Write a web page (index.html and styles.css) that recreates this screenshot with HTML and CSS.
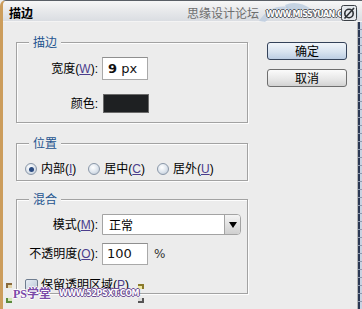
FILE: index.html
```html
<!DOCTYPE html>
<html lang="zh">
<head>
<meta charset="utf-8">
<title>描边</title>
<link rel="stylesheet" href="styles.css">
</head>
<body>
<div class="window">
  <div class="titlebar">
    <span class="title">描边</span>
    <svg class="swoosh" width="60" height="22" viewBox="0 0 60 22">
      <path d="M4 20 C12 8 22 4 34 6 C26 10 18 14 10 21 Z" fill="#b9cbe0" opacity="0.7"/>
      <path d="M30 4 C38 0 48 2 56 8 C48 7 40 8 34 12 Z" fill="#a9bfd8" opacity="0.6"/>
    </svg>
    <span class="wm-cn">思缘设计论坛</span>
    <span class="wm-url">WWW.MISSYUAN.COM</span>
    <svg class="wm-box" width="16" height="16" viewBox="0 0 16 16">
      <rect x="0.5" y="0.5" width="15" height="15" rx="2" fill="#e4e8ec" stroke="#3a3f45"/>
      <circle cx="8" cy="8.5" r="4.2" fill="none" stroke="#2c3035" stroke-width="1.6"/>
      <path d="M3.5 13.5 L13 3" stroke="#2c3035" stroke-width="1.6"/>
    </svg>
  </div>
  <div class="body">
    <div class="main">
      <div class="groups">
        <section class="group g-stroke">
          <span class="legend">描边</span>
          <div class="form">
            <label class="lbl">宽度(<u>W</u>):</label>
            <div class="field w-field"><b>9</b>&nbsp;px</div>
            <label class="lbl">颜色:</label>
            <div class="swatch"></div>
          </div>
        </section>
        <section class="group g-pos">
          <span class="legend">位置</span>
          <div class="radios">
            <span class="opt"><span class="radio on"></span>内部(<u>I</u>)</span>
            <span class="opt"><span class="radio"></span>居中(<u>C</u>)</span>
            <span class="opt"><span class="radio"></span>居外(<u>U</u>)</span>
          </div>
        </section>
        <section class="group g-blend">
          <span class="legend">混合</span>
          <div class="form blend-form">
            <label class="lbl">模式(<u>M</u>):</label>
            <div class="select"><span class="sel-text">正常</span><span class="sel-btn"><span class="tri"></span></span></div>
            <label class="lbl">不透明度(<u>O</u>):</label>
            <div class="op-row"><div class="field op-field">100</div><span class="pct">%</span></div>
          </div>
          <div class="check-row"><span class="checkbox"></span>保留透明区域(<u>P</u>)</div>
        </section>
      </div>
      <div class="buttons">
        <button class="btn default">确定</button>
        <button class="btn">取消</button>
      </div>
    </div>
    <div class="edge"></div>
  </div>
  <div class="wm-bottom">
    <span class="mk mk-tl"></span><span class="mk mk-bl"></span><span class="mk mk-tr"></span><span class="mk mk-br"></span>
    <span class="ps">PS学堂</span>
    <span class="ps-url">WWW.52PSXT.COM</span>
  </div>
</div>
</body>
</html>
```
FILE: styles.css
```css
* { box-sizing: border-box; }
html, body { margin: 0; padding: 0; }
body {
  width: 362px;
  height: 309px;
  overflow: hidden;
  font-family: "Liberation Sans", "Noto Sans CJK SC", sans-serif;
  font-size: 12px;
  color: #000;
  background: #ececec;
}
u { text-decoration: underline; color: #4b3d8c; text-underline-offset: 1px; }

.window {
  position: relative;
  width: 362px;
  height: 309px;
  overflow: hidden;
  display: flex;
  flex-direction: column;
  border-left: 3px solid #cc9d5c;
  border-top: 1px solid #5a5f66;
  border-top-left-radius: 6px;
  background: #ececec;
}

.titlebar {
  position: relative;
  height: 21px;
  flex: none;
  display: flex;
  align-items: center;
  padding-left: 6px;
  background: linear-gradient(to bottom, #f7f7f7 0%, #e9eaec 45%, #dadde2 100%);
  border-bottom: 1px solid #f4f4f4;
}
.title {
  font-weight: bold;
  font-size: 12px;
  line-height: 14px;
  margin-top: 3px;
  font-family: "Noto Sans CJK SC", sans-serif;
}
.swoosh { position: absolute; left: 252px; top: 0; }
.wm-cn {
  position: absolute;
  left: 184px;
  top: 4px;
  font-family: "Noto Sans CJK SC", sans-serif;
  font-size: 12px;
  line-height: 16px;
  color: #6e6e6e;
  white-space: nowrap;
}
.wm-url {
  position: absolute;
  left: 263px;
  top: 9px;
  font-family: "DejaVu Sans", sans-serif;
  font-weight: bold;
  font-size: 8px;
  line-height: 9px;
  letter-spacing: -0.6px;
  color: #fff;
  white-space: nowrap;
  text-shadow: 1px 0 #55595e, -1px 0 #55595e, 0 1px #55595e, 0 -1px #55595e;
}
.wm-box { position: absolute; left: 338px; top: 4px; }

.body {
  flex: 1;
  min-height: 0;
  display: flex;
}
.main {
  flex: 1;
  display: flex;
  padding: 20px 0 0 13px;
}
.edge {
  width: 5px;
  flex: none;
  border-left: 1px solid #b5b5b5;
  background:
    repeating-linear-gradient(to bottom, transparent 0 7px, #8e9ab0 7px 8px),
    linear-gradient(to right, #2b3854 0 2px, #c8d2e2 2px);
}

.groups { width: 232px; flex: none; }
.group {
  position: relative;
  border: 1px solid #a2a2a2;
  box-shadow: inset 1px 1px 0 #fdfdfd, 1px 1px 0 #fdfdfd;
}
.legend {
  position: absolute;
  top: -9px;
  left: 12px;
  padding: 0 4px;
  background: #ececec;
  color: #24548f;
  font-family: "Noto Sans CJK SC", sans-serif;
  font-size: 12px;
  line-height: 16px;
}
.g-stroke { height: 81px; padding-top: 14px; }
.g-pos { height: 38px; margin-top: 20px; padding: 17px 0 0 8px; }
.g-blend { height: 95px; margin-top: 18px; padding-top: 14px; }

.form {
  display: grid;
  grid-template-columns: 81px auto;
  column-gap: 4px;
  row-gap: 14px;
  align-items: center;
  justify-items: start;
}
.lbl { justify-self: end; line-height: 16px; white-space: nowrap; }
.field {
  height: 23px;
  width: 46px;
  background: #fff;
  border: 1px solid #a9a9a9;
  border-top-color: #8f8f8f;
  padding-left: 5px;
  line-height: 21px;
  font-size: 13px;
  font-family: "DejaVu Sans", sans-serif;
  color: #111;
  white-space: nowrap;
}
.w-field b { font-weight: bold; }
.swatch {
  width: 46px;
  height: 19px;
  margin-left: 1px;
  background: #1e2022;
  border: 1px solid #6a6a6a;
}

.radios { display: flex; align-items: center; gap: 12px; line-height: 16px; }
.opt { display: flex; align-items: center; white-space: nowrap; }
.radio {
  width: 12px;
  height: 12px;
  border-radius: 50%;
  border: 1px solid #8a97a8;
  background: radial-gradient(circle at 40% 35%, #ffffff 0, #dfe6ee 50%, #b7c3d2 100%);
  margin-right: 4px;
  position: relative;
}
.radio.on::after {
  content: "";
  position: absolute;
  left: 2.5px;
  top: 2.5px;
  width: 5px;
  height: 5px;
  border-radius: 50%;
  background: #2a4a80;
}

.blend-form { row-gap: 8px; }
.select {
  display: flex;
  width: 139px;
  height: 21px;
  background: #fff;
  border: 1px solid #a3a3a3;
  border-radius: 0 4px 4px 0;
}
.sel-text {
  flex: 1;
  padding-left: 6px;
  line-height: 19px;
  font-family: "Noto Sans CJK SC", sans-serif;
}
.sel-btn {
  width: 16px;
  display: flex;
  align-items: center;
  justify-content: center;
  border-left: 1px solid #a3a3a3;
  border-radius: 0 3px 3px 0;
  background: linear-gradient(to bottom, #f4f4f4, #cfcfcf);
}
.tri {
  width: 0; height: 0;
  border-left: 4px solid transparent;
  border-right: 4px solid transparent;
  border-top: 6px solid #000;
}
.op-row { display: flex; align-items: center; }
.op-field { height: 22px; width: 46px; line-height: 20px; padding-left: 4px; }
.pct { margin-left: 6px; font-family: "DejaVu Sans", sans-serif; font-size: 12px; color: #333; }

.check-row {
  display: flex;
  align-items: center;
  margin: 12px 0 0 8px;
  line-height: 16px;
  white-space: nowrap;
}
.checkbox {
  width: 13px;
  height: 13px;
  border: 1px solid #6f7d8f;
  border-radius: 2px;
  background: linear-gradient(135deg, #e8eef5, #b9c6d6);
  margin-right: 3px;
}

.buttons {
  margin-left: 19px;
  display: flex;
  flex-direction: column;
  gap: 9px;
}
.btn {
  width: 80px;
  height: 18px;
  padding: 0;
  font-family: "Noto Sans CJK SC", sans-serif;
  font-size: 12px;
  line-height: 16px;
  color: #000;
  border: 1px solid #6e6e6e;
  border-radius: 3px;
  background: linear-gradient(to bottom, #fbfbfb 0%, #e6e6e6 60%, #d2d2d2 100%);
}
.btn.default {
  border-color: #34425a;
  background: linear-gradient(to bottom, #f1f5fa 0%, #d8e3f0 55%, #bccde3 100%);
}

.wm-bottom { position: absolute; left: 0; top: 0; width: 362px; height: 309px; pointer-events: none; }
.mk { position: absolute; width: 6px; height: 5px; }
.mk-tl { left: 3px; top: 282px; border-left: 2px solid #8a6a3c; border-top: 2px solid #8a6a3c; background: #e3d5a8; }
.mk-bl { left: 3px; top: 297px; border-left: 2px solid #5b8a3c; border-bottom: 2px solid #5b8a3c; background: #d2e6b4; }
.mk-tr { left: 135px; top: 283px; border-right: 2px solid #8a7a2c; border-top: 2px solid #8a7a2c; background: #efe7a0; }
.mk-br { left: 135px; top: 297px; border-right: 2px solid #555; border-bottom: 2px solid #555; background: #ddd; }
.ps {
  position: absolute;
  left: 10px;
  top: 286px;
  white-space: nowrap;
  font-family: "Liberation Serif", "Noto Sans CJK SC", serif;
  font-weight: bold;
  font-size: 12px;
  line-height: 14px;
  color: #7a4aa8;
  text-shadow: 1px 0 #fff, -1px 0 #fff, 0 1px #fff, 0 -1px #fff;
}
.ps-url {
  position: absolute;
  left: 56px;
  top: 288px;
  white-space: nowrap;
  font-family: "DejaVu Sans", sans-serif;
  font-weight: bold;
  font-size: 8px;
  line-height: 9px;
  letter-spacing: -0.4px;
  color: #fff;
  text-shadow: 1px 0 #6b4b94, -1px 0 #6b4b94, 0 1px #6b4b94, 0 -1px #6b4b94;
}
```
